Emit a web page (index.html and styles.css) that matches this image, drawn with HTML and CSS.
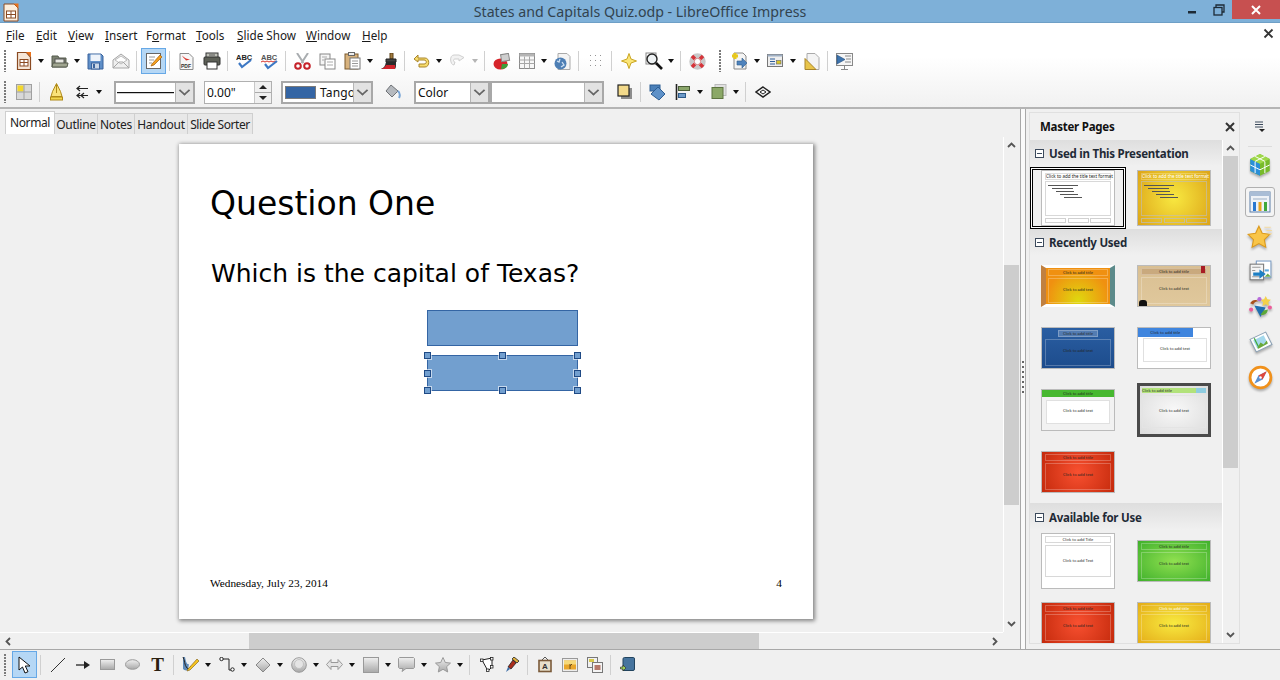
FILE: index.html
```html
<!DOCTYPE html>
<html lang="en">
<head>
<meta charset="utf-8">
<title>States and Capitals Quiz.odp - LibreOffice Impress</title>
<link rel="stylesheet" href="styles.css">
</head>
<body>
<svg class="defs" width="0" height="0" aria-hidden="true">
  <symbol id="i-new" viewBox="0 0 20 20"><path d="M3.500 1.500h9l4 4.500v12.500h-13z" fill="#f6e7d8" stroke="#8a4a22" stroke-width="1.200"/><path d="M12 1h5v5z" fill="#e8721c"/><rect x="6" y="8.500" width="8" height="6.500" fill="#fff" stroke="#8a4a22"/><path d="M6 11.500h8M10 8.500v6.500" stroke="#8a4a22"/></symbol>
</svg>

<header class="titlebar">
  <svg class="app-icon" width="16" height="19" viewBox="0 0 16 19"><path d="M1 1h10l4 4v13H1z" fill="#fbeedd" stroke="#8a4a22"/><path d="M10.500 0.500h5v5z" fill="#e8721c"/><rect x="3.500" y="8" width="9" height="7" fill="#fff" stroke="#8a4a22"/><path d="M3.500 11.500h9M8 8v7" stroke="#8a4a22"/></svg>
  <div class="doc-title">States and Capitals Quiz.odp - LibreOffice Impress</div>
  <div class="win-controls">
    <span class="win-btn"><svg width="10" height="10" viewBox="0 0 10 10"><rect x="1" y="6" width="8" height="2.500" fill="#1d2a36"/></svg></span>
    <span class="win-btn"><svg width="12" height="12" viewBox="0 0 12 12"><path d="M3 3V1h8v7H9" fill="none" stroke="#1d2a36" stroke-width="1.300"/><rect x="1" y="3.500" width="8" height="7.500" fill="none" stroke="#1d2a36" stroke-width="1.300"/></svg></span>
    <span class="win-close"><svg width="12" height="12" viewBox="0 0 12 12"><path d="M2 2l8 8M10 2l-8 8" stroke="#fff" stroke-width="2"/></svg></span>
  </div>
</header>

<div class="chrome">
  <nav class="menubar">
    <span class="m m-file"><u>F</u>ile</span>
    <span class="m m-edit"><u>E</u>dit</span>
    <span class="m m-view"><u>V</u>iew</span>
    <span class="m m-insert"><u>I</u>nsert</span>
    <span class="m m-format">F<u>o</u>rmat</span>
    <span class="m m-tools"><u>T</u>ools</span>
    <span class="m m-show"><u>S</u>lide Show</span>
    <span class="m m-window"><u>W</u>indow</span>
    <span class="m m-help"><u>H</u>elp</span>
    <svg class="doc-close" width="11" height="11" viewBox="0 0 11 11"><path d="M1.500 1.500l8 8M9.500 1.500l-8 8" stroke="#333" stroke-width="1.800"/></svg>
  </nav>

  <div class="toolbar tb-one">
    <span class="grip"></span>
    <span class="b"><svg width="20" height="20"><use href="#i-new"/></svg></span><span class="d"></span>
    <span class="b"><svg width="18" height="16" viewBox="0 0 18 16"><path d="M1 3h6l1 2h7v9H1z" fill="#7d8272" stroke="#555a4c"/><rect x="4" y="6" width="9" height="5" fill="#e8e8e2" stroke="#555"/><path d="M1 14l1-4h15l-1 4z" fill="#a0a590" stroke="#555a4c"/></svg></span><span class="d"></span>
    <span class="b"><svg width="17" height="17" viewBox="0 0 17 17"><path d="M1 1h13l2 2v13H1z" fill="#5f8fc8" stroke="#3a639c"/><rect x="3.500" y="1.500" width="10" height="6.500" fill="#eef3fa"/><rect x="4.500" y="10" width="8" height="6" fill="#c9d6e6" stroke="#3a639c"/><rect x="6" y="11" width="2" height="4" fill="#3a639c"/></svg></span>
    <span class="b"><svg width="18" height="16" viewBox="0 0 18 16"><path d="M1 7l8-6 8 6v8H1z" fill="#efefef" stroke="#a5a5a5"/><path d="M3 7l6-4 6 4-6 4z" fill="#fff" stroke="#bbb"/><path d="M1 15l6-6h4l6 6" fill="none" stroke="#a5a5a5"/></svg></span>
    <span class="s"></span>
    <span class="b b-on"><svg width="18" height="18" viewBox="0 0 18 18"><rect x="1.500" y="1.500" width="14" height="15" fill="#fff" stroke="#666"/><path d="M4 5h6M4 8h5M4 11h3" stroke="#999"/><path d="M7 12l8-9 2 2-8 8-3 1z" fill="#f5a01e" stroke="#a15d08" stroke-width=".7"/></svg></span>
    <span class="s"></span>
    <span class="b"><svg width="15" height="17" viewBox="0 0 15 17"><path d="M1 .5h9l4 4v12H1z" fill="#f7f7f7" stroke="#8a8a8a"/><path d="M3 2.500c3 3 5 3.500 8 4l-4 1C6 6 4 4.500 3 2.500z" fill="#d8322a"/><text x="2" y="14.500" class="svgt">PDF</text></svg></span>
    <span class="b"><svg width="18" height="18" viewBox="0 0 18 18"><rect x="3" y="1" width="12" height="5" fill="#bfc1b8" stroke="#333"/><rect x="1" y="5" width="16" height="8" rx="1" fill="#5d6057" stroke="#333"/><rect x="4" y="10" width="10" height="7" fill="#fff" stroke="#333"/><path d="M6 3h6" stroke="#555"/></svg></span>
    <span class="s"></span>
    <span class="b"><svg width="18" height="16" viewBox="0 0 18 16"><text x="0" y="7" class="abc">ABC</text><path d="M3 10l3 4 9-7" fill="none" stroke="#3d78c4" stroke-width="2.200"/></svg></span>
    <span class="b"><svg width="18" height="17" viewBox="0 0 18 17"><text x="0" y="7" class="abc abc-r">ABC</text><path d="M0 9l2-1 2 1 2-1 2 1 2-1 2 1 2-1 2 1" fill="none" stroke="#d8322a"/><path d="M4 11l3 4 9-7" fill="none" stroke="#3d78c4" stroke-width="2.200"/></svg></span>
    <span class="s"></span>
    <span class="b"><svg width="17" height="17" viewBox="0 0 17 17"><path d="M3 0l6.500 10M14 0L7.500 10" stroke="#a9adb0" stroke-width="2"/><circle cx="4" cy="13" r="2.800" fill="#fff" stroke="#c5222a" stroke-width="2"/><circle cx="13" cy="13" r="2.800" fill="#fff" stroke="#c5222a" stroke-width="2"/></svg></span>
    <span class="b"><svg width="17" height="17" viewBox="0 0 17 17"><rect x="1" y="1" width="10" height="11" fill="#f6f6f6" stroke="#888"/><rect x="6" y="6" width="10" height="10" fill="#fff" stroke="#888"/><path d="M3 4h5M3 7h2M8 9h6M8 12h6" stroke="#aaa"/></svg></span>
    <span class="b"><svg width="17" height="18" viewBox="0 0 17 18"><rect x="1" y="2" width="13" height="15" fill="#d7b27e" stroke="#7d5a2c"/><rect x="4.500" y=".5" width="6" height="3" fill="#eee" stroke="#666"/><rect x="6" y="6" width="10" height="11" fill="#fff" stroke="#777"/><path d="M8 9h6M8 11.500h6M8 14h6" stroke="#999"/></svg></span><span class="d"></span>
    <span class="b"><svg width="17" height="17" viewBox="0 0 17 17"><path d="M10 0h3v6h-3z" fill="#a07a3e" stroke="#5f4218"/><path d="M6 6h10v3H6z" fill="#444" stroke="#222"/><path d="M6 9h10c0 4 0 6-1 7H1c3-1 4-3 5-7z" fill="#2b2b2b"/><path d="M1 16c3-1 4-2 5-4h9v4z" fill="#d0242c"/></svg></span>
    <span class="s"></span>
    <span class="b"><svg width="17" height="14" viewBox="0 0 17 14"><path d="M5 1L1 5l4 3V6h6c3 0 3 4 0 4H6v3h6c5 0 5-9 0-9H5z" fill="#f7dc6c" stroke="#a8842a"/></svg></span><span class="d"></span>
    <span class="b"><svg width="17" height="14" viewBox="0 0 17 14"><path d="M10 1h-5c-5 0-4 10 0 10l1-3c-2 0-2-3 0-3h4v2l5-3.500z" fill="#f2f2f2" stroke="#cfcfcf"/></svg></span><span class="d d-off"></span>
    <span class="s"></span>
    <span class="b"><svg width="18" height="17" viewBox="0 0 18 17"><ellipse cx="7.500" cy="11" rx="7" ry="5.500" fill="#d6242a"/><path d="M8 16c4 0 7-2 7-5H9z" fill="#3f9c3a"/><rect x="8" y="1" width="8" height="7" fill="#cfcfcf" stroke="#888" transform="rotate(-10 12 4)"/></svg></span>
    <span class="b"><svg width="16" height="16" viewBox="0 0 16 16"><rect x=".5" y=".5" width="15" height="15" fill="#f8f8f8" stroke="#8b8b8b"/><rect x=".5" y=".5" width="15" height="3" fill="#b5b5b5"/><path d="M.5 7h15M.5 10.500h15M5.500 3.500v12M10.500 3.500v12" stroke="#a8a8a8"/></svg></span><span class="d"></span>
    <span class="b"><svg width="17" height="17" viewBox="0 0 17 17"><path d="M4 .5h9l3 3v13H4z" fill="#f4f4f4" stroke="#aaa"/><circle cx="6.500" cy="10.500" r="6" fill="#4e7fb5"/><path d="M3 8l2 1 1-3M8 9l2 3-3 2" stroke="#cfe0f2" stroke-width="1.300" fill="none"/></svg></span>
    <span class="s"></span>
    <span class="b"><svg width="14" height="14" viewBox="0 0 14 14" class="dots"><path d="M1 1h1v1H1zm5 0h1v1H6zm5 0h1v1h-1zM1 6h1v1H1zm5 0h1v1H6zm5 0h1v1h-1zM1 11h1v1H1zm5 0h1v1H6zm5 0h1v1h-1z" fill="#8a8a8a"/></svg></span>
    <span class="s"></span>
    <span class="b"><svg width="16" height="16" viewBox="0 0 16 16"><path d="M8 .5l2 5.500 5.500 2-5.500 2-2 5.500-2-5.500L.5 8l5.500-2z" fill="#fbe678" stroke="#c9a520"/></svg></span>
    <span class="b"><svg width="18" height="18" viewBox="0 0 18 18"><rect x="1" y="1" width="10" height="11" fill="#fff" stroke="#888"/><circle cx="7" cy="7" r="5" fill="#eef2f4" stroke="#222" stroke-width="1.400"/><path d="M11 11l6 6" stroke="#111" stroke-width="2.600"/></svg></span><span class="d"></span>
    <span class="s"></span>
    <span class="b"><svg width="17" height="17" viewBox="0 0 17 17"><circle cx="8.500" cy="8.500" r="6" fill="#fff" stroke="#c9c9c9" stroke-width="4.500"/><path d="M3 3l3 3M14 3l-3 3M3 14l3-3M14 14l-3-3" stroke="#d6343a" stroke-width="3.500"/><circle cx="8.500" cy="8.500" r="3.200" fill="#fff" stroke="#b44" stroke-width=".7"/></svg></span>
    <span class="grip grip-mid"></span>
    <span class="b"><svg width="18" height="18" viewBox="0 0 18 18"><path d="M3 1h9l3 3v13H3z" fill="#f4f4f4" stroke="#888"/><path d="M6 9h5V6l5 5-5 5v-3H6z" fill="#4f83bd" stroke="#2d5a8c" stroke-width=".6"/><path d="M4 1v6M1 4h6" stroke="#e8c81c" stroke-width="3"/></svg></span><span class="d"></span>
    <span class="b"><svg width="18" height="14" viewBox="0 0 18 14"><rect x=".5" y=".5" width="15" height="12" fill="#eee" stroke="#777"/><rect x=".5" y=".5" width="15" height="2" fill="#9fb0c4"/><path d="M3 5h5M3 7.500h5M3 10h5" stroke="#2f5f9c"/><rect x="9.500" y="6.500" width="4.500" height="3.500" fill="#d6c52c" stroke="#666" stroke-width=".6"/></svg></span><span class="d"></span>
    <span class="b"><svg width="16" height="17" viewBox="0 0 16 17"><path d="M3 .5h8l4 4v12H3z" fill="#f4f4f4" stroke="#aaa"/><path d="M1 5.500v11h11z" fill="#e8c44a" stroke="#a8842a"/></svg></span>
    <span class="s"></span>
    <span class="b"><svg width="17" height="17" viewBox="0 0 17 17"><rect x=".5" y=".5" width="16" height="12" fill="#f6f6f6" stroke="#888"/><path d="M1 2v9l8-4.500z" fill="#3e74ae" stroke="#244e7c" stroke-width=".6"/><path d="M9 3h6M10 6h5M9 9h6" stroke="#888"/><path d="M8.500 13v3M5 16.500h7" stroke="#888"/></svg></span>
  </div>

  <div class="toolbar tb-two">
    <span class="grip"></span>
    <span class="b"><svg width="16" height="16" viewBox="0 0 16 16"><rect x=".5" y=".5" width="15" height="15" fill="#d8d8d8" stroke="#a0a0a0"/><rect x="1.500" y="1.500" width="6" height="6" fill="#f3d82c"/><path d="M8 .5v15M.5 8h15" stroke="#a0a0a0"/></svg></span>
    <span class="s"></span>
    <span class="b"><svg width="13" height="18" viewBox="0 0 13 18"><path d="M6.500 .5l4 8 1.500 5H1l1.500-5z" fill="#f9e27a" stroke="#b08a18"/><path d="M6.500 1v9" stroke="#b08a18"/><rect x=".5" y="14" width="12" height="3" fill="#f2d64c" stroke="#b08a18"/></svg></span>
    <span class="b"><svg width="14" height="14" viewBox="0 0 14 14"><path d="M13 3.500H2M5 1L2 3.500 5 6M13 10.500H2M5 8l-3 2.500L5 13M9 8l-3 2.500L9 13" fill="none" stroke="#222" stroke-width="1.200"/></svg></span><span class="d"></span>
    <span class="combo combo-line"><span class="line-sample"></span><span class="arrow"></span></span>
    <span class="combo combo-width"><span class="combo-text">0.00"</span><span class="spin"><i class="up"></i><i class="dn"></i></span></span>
    <span class="combo combo-color"><span class="swatch"></span><span class="combo-text">Tango</span><span class="arrow"></span></span>
    <span class="b b-fill"><svg width="16" height="16" viewBox="0 0 16 16"><path d="M6 1l7 6-6 6-6-6z" fill="#b5b9be" stroke="#6f7276"/><path d="M13 7c2 2 2 5 1 7" fill="none" stroke="#7aa6d6" stroke-width="2"/></svg></span>
    <span class="combo combo-area"><span class="combo-text">Color</span><span class="arrow"></span></span>
    <span class="combo combo-value"><span class="combo-text"></span><span class="arrow"></span></span>
    <span class="b b-shadow"><svg width="16" height="16" viewBox="0 0 16 16"><rect x="4" y="4" width="11" height="11" fill="#8d8d8d"/><rect x="1" y="1" width="11" height="11" fill="#f2d98a" stroke="#222" stroke-width="1.200"/></svg></span>
    <span class="s"></span>
    <span class="b"><svg width="17" height="17" viewBox="0 0 17 17"><rect x="1" y="1" width="10" height="6" fill="#4a7fb8" stroke="#2b5c92"/><path d="M2 10l7-7 7 7-6 6z" fill="#5e91c8" stroke="#2b5c92"/></svg></span>
    <span class="b"><svg width="16" height="16" viewBox="0 0 16 16"><path d="M1.500 0v16" stroke="#222" stroke-width="1.600"/><rect x="3.500" y="2.500" width="11" height="4" fill="#8aa66a" stroke="#4a5c38"/><rect x="3.500" y="9.500" width="7" height="4" fill="#6c9ac8" stroke="#2e5a88"/></svg></span><span class="d"></span>
    <span class="b"><svg width="16" height="16" viewBox="0 0 16 16"><rect x="4" y=".5" width="11" height="11" fill="#e0e0e0" stroke="#bbb"/><rect x="1" y="3.500" width="11" height="11" fill="#8ba867" stroke="#5d7440"/></svg></span><span class="d"></span>
    <span class="s"></span>
    <span class="b"><svg width="16" height="12" viewBox="0 0 16 12"><path d="M8 1l7 5-7 5-7-5z" fill="none" stroke="#222" stroke-width="1.500"/><path d="M5 6l3-2 3 2-3 2z" fill="#fff" stroke="#222"/></svg></span>
  </div>
</div>

<main class="work">
  <section class="editor">
    <div class="tabs">
      <span class="tab tab-on">Normal</span>
      <span class="tab tab-out">Outline</span>
      <span class="tab tab-not">Notes</span>
      <span class="tab tab-han">Handout</span>
      <span class="tab tab-sor">Slide Sorter</span>
    </div>
    <div class="stage">
      <div class="canvas">
        <article class="slide">
          <h1 class="s-title">Question One</h1>
          <p class="s-sub">Which is the capital of Texas?</p>
          <div class="shape shape-a"></div>
          <div class="shape shape-b">
            <i class="h h-tl"></i><i class="h h-tc"></i><i class="h h-tr"></i>
            <i class="h h-ml"></i><i class="h h-mr"></i>
            <i class="h h-bl"></i><i class="h h-bc"></i><i class="h h-br"></i>
          </div>
          <div class="s-foot"><span>Wednesday, July 23, 2014</span><span>4</span></div>
        </article>
      </div>
      <div class="vscroll">
        <span class="sb-arrow"><svg width="9" height="6" viewBox="0 0 9 6"><path d="M1 5l3.500-3.500L8 5" fill="none" stroke="#555" stroke-width="1.800"/></svg></span>
        <span class="v-track"><span class="v-thumb"></span></span>
        <span class="sb-arrow"><svg width="9" height="6" viewBox="0 0 9 6"><path d="M1 1l3.500 3.500L8 1" fill="none" stroke="#555" stroke-width="1.800"/></svg></span>
      </div>
    </div>
    <div class="hscroll">
      <span class="h-arrow"><svg width="6" height="9" viewBox="0 0 6 9"><path d="M5 1L1.500 4.500 5 8" fill="none" stroke="#555" stroke-width="1.800"/></svg></span>
      <span class="h-track"><span class="h-thumb"></span></span>
      <span class="h-arrow"><svg width="6" height="9" viewBox="0 0 6 9"><path d="M1 1l3.500 3.500L1 8" fill="none" stroke="#555" stroke-width="1.800"/></svg></span>
    </div>
  </section>

  <div class="splitter"><span class="split-dots"></span></div>

  <aside class="panel">
    <div class="panel-head"><span>Master Pages</span><svg width="10" height="10" viewBox="0 0 10 10"><path d="M1 1l8 8M9 1L1 9" stroke="#333" stroke-width="2"/></svg></div>
    <div class="panel-body">
      <div class="deck">
        <div class="sec"><span class="box"></span>Used in This Presentation</div>
        <div class="grid grid-used">
          <div class="cell"><span class="sel"><span class="th th-plain th-used"><b>Click to add the title text format</b><em class="ol"><u></u><u></u><u></u><u></u><u></u></em><s class="ft"><i></i><i></i><i></i></s></span></span></div>
          <div class="cell"><span class="th th-yellow th-used"><b>Click to add the title text format</b><em class="ol"><u></u><u></u><u></u><u></u><u></u></em><s class="ft"><i></i><i></i><i></i></s></span></div>
        </div>
        <div class="sec"><span class="box"></span>Recently Used</div>
        <div class="grid">
          <div class="cell"><span class="th th-orange"><b>Click to add title</b><span>Click to add text</span></span></div>
          <div class="cell"><span class="th th-tan"><b>Click to add title</b><span>Click to add text</span></span></div>
          <div class="cell"><span class="th th-blue"><b>Click to add title</b><span>Click to add text</span></span></div>
          <div class="cell"><span class="th th-sky"><b>Click to add title</b><span>Click to add text</span></span></div>
          <div class="cell"><span class="th th-green"><b>Click to add title</b><span>Click to add text</span></span></div>
          <div class="cell"><span class="th th-dark"><b>Click to add title</b><span>Click to add text</span></span></div>
          <div class="cell"><span class="th th-red"><b>Click to add title</b><span>Click to add text</span></span></div>
        </div>
        <div class="sec sec-tall"><span class="box"></span>Available for Use</div>
        <div class="grid">
          <div class="cell"><span class="th th-white"><b>Click to add Title</b><span>Click to add Text</span></span></div>
          <div class="cell"><span class="th th-lime"><b>Click to add title</b><span>Click to add text</span></span></div>
          <div class="cell"><span class="th th-red"><b>Click to add title</b><span>Click to add text</span></span></div>
          <div class="cell"><span class="th th-gold"><b>Click to add title</b><span>Click to add text</span></span></div>
        </div>
      </div>
      <div class="pscroll">
        <span class="sb-arrow"><svg width="9" height="6" viewBox="0 0 9 6"><path d="M1 5l3.500-3.500L8 5" fill="none" stroke="#555" stroke-width="1.800"/></svg></span>
        <span class="p-track"><span class="p-thumb"></span></span>
        <span class="sb-arrow"><svg width="9" height="6" viewBox="0 0 9 6"><path d="M1 1l3.500 3.500L8 1" fill="none" stroke="#555" stroke-width="1.800"/></svg></span>
      </div>
    </div>
  </aside>

  <div class="sidetabs">
    <span class="st st-menu"><svg width="12" height="12" viewBox="0 0 12 12"><path d="M1 1h8M1 3.500h8M1 6h8" stroke="#3c4a5c"/><path d="M5 8h6l-3 3z" fill="#222"/></svg></span>
    <span class="st-rule"></span>
    <span class="st st-i"><svg width="24" height="26" viewBox="0 0 22 24"><path d="M11 1l9 4.500v11L11 21l-9-4.500v-11z" fill="#77bb2a"/><path d="M2 5.500l9 4.500v11l-9-4.500z" fill="#2a8fd8"/><path d="M11 1l9 4.500-9 4.500-9-4.500z" fill="#9fd84a"/><path d="M6.500 3.200l9 4.500M15.500 3.200l-9 4.500M6.500 8v10.500M15.500 8v10.500M2 11l9 4.500 9-4.500" stroke="#fff" stroke-width=".9" fill="none"/></svg></span>
    <span class="st st-on"><svg width="24" height="24" viewBox="0 0 24 24"><rect x="2" y="2" width="20" height="20" fill="#eef2f7" stroke="#5d7fa8"/><rect x="2" y="2" width="20" height="4" fill="#a9bdd6"/><path d="M5 9h14" stroke="#9db0c6"/><rect x="5" y="12" width="3" height="9" fill="#2a78d0"/><rect x="10.500" y="12" width="3" height="9" fill="#e8a41c"/><rect x="16" y="12" width="3" height="9" fill="#3fa83a"/></svg></span>
    <span class="st st-i"><svg width="26" height="26" viewBox="0 0 24 24"><path d="M11 2l3 6.500 7 1-5 5 1.300 7L11 18l-6.300 3.500L6 14.500 1 9.500l7-1z" fill="#f9c548" stroke="#dc9a1c"/><path d="M16 3h6M18 6h5M20 9h3" stroke="#f4d9a0"/></svg></span>
    <span class="st st-i"><svg width="25" height="25" viewBox="0 0 24 24"><rect x="8" y="1" width="14" height="16" fill="#fff" stroke="#7b9cc4"/><rect x="2" y="4" width="13" height="15" fill="#f4f4f4" stroke="#777"/><path d="M4 7h8M4 10h3M4 16h8" stroke="#999"/><path d="M5 12h6V9l6 4.500-6 4.500v-3H5z" fill="#1d7fc4"/><path d="M16 9h4v2h-4z" fill="#5ca8e0"/><path d="M16 16l3-3 3 3z" fill="#6ba84a"/></svg></span>
    <span class="st st-i"><svg width="25" height="25" viewBox="0 0 24 24"><path d="M6 10l11 2-5 9z" fill="#1f6fb0"/><path d="M2 8c2-4 6-4 8-2-2 0-4 1-5 3z" fill="#a8501c"/><path d="M12 19c3 1 7-1 7-5l-4 1z" fill="#5da83a"/><path d="M17 1l1.500 3 3.500.5-2.500 2.500.6 3.500-3.100-1.700-3.100 1.700.6-3.500-2.500-2.500L15.500 4z" fill="#f4d14a"/><circle cx="11" cy="4" r="2" fill="#b66adb"/><circle cx="21" cy="12" r="2" fill="#ec5d9a"/><circle cx="3" cy="14" r="2" fill="#ec5d9a"/></svg></span>
    <span class="st st-i"><svg width="25" height="25" viewBox="0 0 24 24"><path d="M2 9l15-7 6 12-15 7z" fill="#fff" stroke="#8ba0b4"/><path d="M5 10l10-5 4 8-10 5z" fill="#a4d8ec"/><path d="M9 17l3-5 3 2 3-4 1 3-9 5z" fill="#6aa83a"/><path d="M6 8l4 8" stroke="#3fa83a" stroke-width="1.200"/></svg></span>
    <span class="st st-i"><svg width="25" height="25" viewBox="0 0 24 24"><circle cx="12" cy="12" r="10" fill="#fff" stroke="#f0911c" stroke-width="2.600"/><path d="M6 18l4-8 8-4-4 8z" fill="#5b8fd0"/><path d="M18 6l-8 4 4 4z" fill="#e0483c"/><circle cx="12" cy="12" r="1.200" fill="#fff"/></svg></span>
  </div>
</main>

<footer class="toolbar tb-draw">
  <span class="grip"></span>
  <span class="b b-on b-sel"><svg width="13" height="18" viewBox="0 0 13 18"><path d="M1 1v13l3.500-3 2.500 6 3-1.300L7.300 10H12z" fill="#fff" stroke="#111"/></svg></span>
  <span class="s"></span>
  <span class="b"><svg width="16" height="16" viewBox="0 0 16 16"><path d="M1 15L15 1" stroke="#333"/></svg></span>
  <span class="b"><svg width="14" height="8" viewBox="0 0 14 8"><path d="M0 4h9" stroke="#222" stroke-width="1.300"/><path d="M8 0l6 4-6 4z" fill="#222"/></svg></span>
  <span class="b"><svg width="15" height="12" viewBox="0 0 15 12"><defs><linearGradient id="g1" x1="0" y1="0" x2="0" y2="1"><stop offset="0" stop-color="#f0f0f0"/><stop offset="1" stop-color="#a8a8a8"/></linearGradient></defs><rect x=".5" y=".5" width="14" height="10" fill="url(#g1)" stroke="#9a9a9a"/></svg></span>
  <span class="b"><svg width="15" height="11" viewBox="0 0 15 11"><ellipse cx="7.500" cy="5.500" rx="7" ry="4.800" fill="url(#g1)" stroke="#9a9a9a"/></svg></span>
  <span class="b"><span class="t-glyph">T</span></span>
  <span class="s"></span>
  <span class="b"><svg width="17" height="15" viewBox="0 0 17 15"><path d="M1 0h2c1 5 2 8 4 7l-1 6c-2 1-4 0-5-1z" fill="#5f8ab8"/><path d="M1 0c2 3 1 8 4 11 2 2 3 0 4-2" fill="none" stroke="#222"/><path d="M6 12l9-10 2 2-9 9-3 1z" fill="#f5c21e" stroke="#7a5a10" stroke-width=".6"/></svg></span><span class="d"></span>
  <span class="b"><svg width="16" height="15" viewBox="0 0 16 15"><path d="M4 2h6v11h3" fill="none" stroke="#222"/><circle cx="2.500" cy="2" r="1.700" fill="#fff" stroke="#222"/><circle cx="13.500" cy="12.500" r="1.700" fill="#fff" stroke="#222"/></svg></span><span class="d"></span>
  <span class="b"><svg width="16" height="16" viewBox="0 0 16 16"><path d="M8 1l7 7-7 7-7-7z" fill="url(#g1)" stroke="#888"/></svg></span><span class="d"></span>
  <span class="b"><svg width="16" height="16" viewBox="0 0 16 16"><circle cx="8" cy="8" r="7.300" fill="url(#g1)" stroke="#999"/><circle cx="8" cy="7" r="4.500" fill="#e4e4e4" stroke="#c2c2c2"/></svg></span><span class="d"></span>
  <span class="b"><svg width="17" height="11" viewBox="0 0 17 11"><path d="M5 .5v3h7v-3l4.500 5-4.500 5v-3H5v3L.5 5.500z" fill="#e4e4e4" stroke="#999"/></svg></span><span class="d"></span>
  <span class="b"><svg width="16" height="16" viewBox="0 0 16 16"><rect x=".5" y=".5" width="15" height="15" fill="url(#g1)" stroke="#999"/></svg></span><span class="d"></span>
  <span class="b"><svg width="17" height="15" viewBox="0 0 17 15"><path d="M1.500.5h14l1 1v9l-1 1H8l-4 3 1-3H1.500l-1-1v-9z" fill="url(#g1)" stroke="#999"/></svg></span><span class="d"></span>
  <span class="b"><svg width="16" height="16" viewBox="0 0 16 16"><path d="M8 .5l2.300 5 5.200.6-3.900 3.600 1.100 5.300L8 12.300 3.300 15l1.100-5.300L.5 6.100l5.200-.6z" fill="url(#g1)" stroke="#999"/></svg></span><span class="d"></span>
  <span class="s"></span>
  <span class="b"><svg width="14" height="15" viewBox="0 0 14 15"><path d="M2 3l10-2 0 9-4 4z" fill="#fff" stroke="#222"/><rect x=".5" y="2" width="2.500" height="2.500" fill="#fff" stroke="#222" stroke-width=".8"/><rect x="10.500" y=".5" width="2.500" height="2.500" fill="#fff" stroke="#222" stroke-width=".8"/><rect x="10.500" y="8.500" width="2.500" height="2.500" fill="#fff" stroke="#222" stroke-width=".8"/><rect x="6.500" y="12" width="2.500" height="2.500" fill="#fff" stroke="#222" stroke-width=".8"/></svg></span>
  <span class="b"><svg width="14" height="16" viewBox="0 0 14 16"><path d="M9 0l5 4-2 2-5-4z" fill="#e0b03c" stroke="#222" stroke-width=".8"/><path d="M8 3l3 3-5 6-3-2z" fill="#a82c1c" stroke="#222" stroke-width=".8"/><path d="M3 10l2 2-4 3z" fill="#3f6fa8"/></svg></span>
  <span class="s"></span>
  <span class="b"><svg width="14" height="16" viewBox="0 0 14 16"><path d="M4 3l3-3 3 3" fill="none" stroke="#555"/><rect x="1" y="3.500" width="12" height="11" fill="#e8e0cc" stroke="#7a5a3a" stroke-width="1.600"/><text x="4" y="12" class="svgt svgt-a">A</text></svg></span>
  <span class="b"><svg width="16" height="14" viewBox="0 0 16 14"><rect x=".5" y=".5" width="15" height="13" fill="#ededed" stroke="#999"/><rect x="2" y="2.500" width="12" height="9" fill="#e8a62a"/><rect x="2" y="2.500" width="12" height="4" fill="#f5d97a"/><path d="M8 11V6M8 8l2-2" stroke="#6a4a1a"/></svg></span>
  <span class="b"><svg width="16" height="16" viewBox="0 0 16 16"><rect x=".5" y=".5" width="10" height="10" fill="#f0f0f0" stroke="#777"/><rect x="2" y="2" width="5" height="3" fill="#d6c84a"/><rect x="5.500" y="5.500" width="10" height="10" fill="#f4f4f4" stroke="#777"/><rect x="7.500" y="8" width="6" height="5" fill="#b5786a"/></svg></span>
  <span class="s"></span>
  <span class="b"><svg width="15" height="15" viewBox="0 0 15 15"><path d="M3 2q0-1.500 1.500-1.500h9q1 0 1 1.500v10q0 1.500-1.500 1.500H3z" fill="#46749e" stroke="#22445f"/><path d="M.5 10h2.500V8l3 3-3 3v-2H.5z" fill="#9fcf5a" stroke="#222" stroke-width=".6"/></svg></span>
</footer>
</body>
</html>
```

FILE: styles.css
```css
* { box-sizing: border-box; }
html, body { margin: 0; padding: 0; }
body {
  width: 1280px;
  height: 680px;
  overflow: hidden;
  background: #f0f0f0;
  font-family: "Noto Sans", "Open Sans", sans-serif;
  color: #111;
  display: flex;
  flex-direction: column;
}
.defs { position: absolute; }
.svgt { font: bold 5px "Liberation Sans", sans-serif; fill: #333; }
.svgt-a { font-size: 8px; }
.abc { font: bold 7.500px "Liberation Sans", sans-serif; fill: #222; }
.abc-r { fill: #555; }

/* title bar */
.titlebar {
  height: 23px;
  flex: none;
  background: #7eb0d8;
  border-bottom: 1px solid #6e9fc6;
  display: flex;
  align-items: flex-start;
  position: relative;
}
.app-icon { margin: 3px 0 0 3px; flex: none; }
.doc-title {
  flex: 1;
  text-align: center;
  font-size: 14.200px;
  line-height: 23px;
  color: #32434f;
  margin-right: 19px;
}
.win-controls { display: flex; align-items: flex-start; position: absolute; right: 0; top: 0; }
.win-btn { width: 27px; height: 19px; display: flex; align-items: center; justify-content: center; }
.win-close { width: 48px; height: 19px; background: #c75050; display: flex; align-items: center; justify-content: center; }

/* chrome */
.chrome {
  flex: none;
  height: 86px;
  background: linear-gradient(#fff 0, #fff 40%, #f1f1f1 100%);
  border-bottom: 2px solid #b4b4b4;
}
.menubar {
  height: 23px;
  display: flex;
  align-items: center;
  font-size: 11.700px;
  position: relative;
  color: #1a1a1a;
}
.m { display: block; flex: none; }
.m-file { margin-left: 6px; width: 30px; }
.m-edit { width: 32px; }
.m-view { width: 37px; }
.m-insert { width: 41px; }
.m-format { width: 50px; }
.m-tools { width: 41px; }
.m-show { width: 69px; }
.m-window { width: 56px; }
.m-help { width: 40px; }
.doc-close { position: absolute; right: 6px; top: 5px; }

/* toolbars */
.toolbar { display: flex; align-items: center; }
.tb-one { height: 30px; }
.tb-two { height: 30px; margin-top: 1px; }
.grip {
  width: 11px;
  height: 22px;
  flex: none;
  background: radial-gradient(circle at 1px 1px, #7a7a7a 0.8px, transparent 1.100px) 4px 0 / 3px 3px repeat-y;
}
.grip-mid { width: 17px; background-position: 9px 0; }
.b { width: 25px; height: 26px; flex: none; display: flex; align-items: center; justify-content: center; }
.b-on { background: #b5d7f5; border: 1px solid #66a8e6; }
.d { width: 11px; height: 20px; flex: none; position: relative; }
.d::after {
  content: "";
  position: absolute;
  left: 2px;
  top: 8px;
  border-left: 3.500px solid transparent;
  border-right: 3.500px solid transparent;
  border-top: 4px solid #111;
}
.d-off::after { border-top-color: #b5b5b5; }
.s { width: 8px; height: 20px; flex: none; position: relative; }
.s::after { content: ""; position: absolute; left: 3px; top: 0; width: 1px; height: 20px; background: #d0d0d0; }
.dots { opacity: .9; }

/* combos */
.combo {
  height: 23px;
  flex: none;
  background: #fff;
  border: 2px solid #a8a8a8;
  display: flex;
  align-items: center;
  font-size: 12px;
  color: #111;
}
.combo-text { flex: 1; min-width: 0; white-space: nowrap; }
.arrow {
  flex: none;
  width: 18px;
  height: 100%;
  background: #e2e2e2;
  border-left: 1px solid #b5b5b5;
  position: relative;
}
.arrow::after {
  content: "";
  position: absolute;
  left: 4px;
  top: 3px;
  width: 7px;
  height: 7px;
  border-right: 2px solid #666;
  border-bottom: 2px solid #666;
  transform: scale(.9, .8) rotate(45deg);
}
.combo-line { width: 81px; margin-left: 9px; }
.line-sample { flex: 1; height: 1px; background: #111; margin: 0 1px; box-shadow: 0 1px 0 #ccc; }
.combo-width { width: 68px; margin-left: 9px; padding-left: 2px; border-width: 1px; border-color: #b0b0b0; }
.spin { flex: none; width: 17px; height: 100%; display: flex; flex-direction: column; border-left: 1px solid #c8c8c8; background: #f0f0f0; }
.spin i { flex: 1; position: relative; display: block; }
.spin i::after { content: ""; position: absolute; left: 4px; border-left: 4px solid transparent; border-right: 4px solid transparent; }
.spin .up::after { top: 3px; border-bottom: 4px solid #222; }
.spin .dn { border-top: 1px solid #aaa; }
.spin .dn::after { top: 3px; border-top: 4px solid #222; }
.combo-color { width: 92px; margin-left: 9px; padding-left: 2px; }
.swatch { width: 31px; height: 13px; flex: none; background: #3465a4; border: 1px solid #7b7b7b; margin-right: 4px; }
.combo-color .combo-text { font-size: 12px; letter-spacing: .1px; }
.b-fill { margin-left: 7px; }
.combo-area { width: 76px; margin-left: 9px; padding-left: 2px; }
.combo-value { width: 114px; }
.b-shadow { margin-left: 8px; }

/* main */
.work { flex: 1; min-height: 0; display: flex; }
.editor { width: 1020px; flex: none; display: flex; flex-direction: column; }
.tabs { height: 25px; display: flex; align-items: flex-end; padding-left: 5px; flex: none; font-size: 12px; }
.tab {
  height: 21px;
  line-height: 21px;
  text-align: center;
  background: #e8e8e8;
  border: 1px solid #cfcfcf;
  border-bottom: 0;
  border-left: 0;
  white-space: nowrap;
  letter-spacing: -0.25px;
  color: #222;
}
.tab-on { width: 50px; height: 23px; line-height: 21px; background: #fff; border-left: 1px solid #cfcfcf; letter-spacing: -.4px; }
.tab-out { width: 43px; }
.tab-not { width: 37px; }
.tab-han { width: 53px; }
.tab-sor { width: 65px; letter-spacing: -.45px; }
.stage { flex: 1; min-height: 0; display: flex; }
.canvas { flex: 1; min-width: 0; background: #f0f0f0; padding: 10px 0 0 179px; border-bottom: 1px solid #fff; }
.slide {
  width: 634px;
  height: 475px;
  background: #fff;
  box-shadow: 1px 1px 4px 1px rgba(0,0,0,.45);
  position: relative;
  padding: 37px 31px 0 31px;
}
.s-title {
  margin: 0;
  font: 400 33px/46px "DejaVu Sans", sans-serif;
  color: #000;
}
.s-sub {
  margin: 30px 0 0 1px;
  font: 400 25px/34px "DejaVu Sans", sans-serif;
  color: #000;
}
.shape { position: absolute; background: #729fcf; border: 1px solid #3465a4; }
.shape-a { left: 248px; top: 166px; width: 151px; height: 36px; }
.shape-b { left: 248px; top: 211px; width: 151px; height: 36px; }
.h { position: absolute; width: 7px; height: 7px; background: #729fcf; border: 1.500px solid #1f4a85; outline: 1px solid rgba(255,255,255,.6); }
.h-tl { left: -4px; top: -4px; }
.h-tc { left: 71px; top: -4px; }
.h-tr { right: -4px; top: -4px; }
.h-ml { left: -4px; top: 14px; }
.h-mr { right: -4px; top: 14px; }
.h-bl { left: -4px; bottom: -4px; }
.h-bc { left: 71px; bottom: -4px; }
.h-br { right: -4px; bottom: -4px; }
.s-foot {
  position: absolute;
  left: 31px;
  right: 31px;
  top: 432px;
  display: flex;
  justify-content: space-between;
  font: 11.300px/14px "Liberation Serif", serif;
  color: #000;
}
.vscroll { width: 17px; margin: 3px 0 1px; padding-right: 1px; flex: none; display: flex; flex-direction: column; border-left: 1px solid #fff; background: #f0f0f0; }
.sb-arrow { height: 16px; flex: none; display: flex; align-items: center; justify-content: center; }
.v-track { flex: 1; padding: 112px 0 111px; display: flex; }
.v-thumb { flex: 1; background: #cdcdcd; }
.hscroll { height: 16px; flex: none; display: flex; align-items: center; padding-right: 17px; }
.h-arrow { width: 16px; height: 16px; flex: none; display: flex; align-items: center; justify-content: center; }
.h-track { flex: 1; height: 16px; padding: 0 228px 0 233px; display: flex; }
.h-thumb { flex: 1; background: #cdcdcd; }

.splitter { width: 6px; flex: none; border-left: 1px solid #a8a8a8; border-right: 1px solid #a8a8a8; position: relative; background: #fafafa; }
.split-dots { position: absolute; left: 0; top: 252px; width: 4px; height: 32px; background: radial-gradient(circle at 1px 1px, #666 .8px, transparent 1px) 1px 0 / 3px 5px repeat-y; }
.panel { width: 211px; flex: none; margin: 3px 0 5px 3px; border: 1px solid #e0e0e0; display: flex; flex-direction: column; min-height: 0; }
.panel-head { height: 27px; flex: none; display: flex; align-items: center; justify-content: space-between; padding: 0 4px 0 10px; font-size: 11.500px; letter-spacing: -.25px; font-weight: 700; color: #111; }
.panel-body { flex: 1; min-height: 0; display: flex; }
.deck { width: 192px; flex: none; overflow: hidden; }
.sec {
  height: 26px;
  display: flex;
  align-items: center;
  font-size: 11.500px;
  letter-spacing: -.25px;
  font-weight: 700;
  color: #1f2a36;
  padding-left: 5px;
  background: linear-gradient(#dedede, #f0f0f0);
  white-space: nowrap;
}
.sec-tall { height: 27px; padding-top: 2px; }
.box { width: 9px; height: 9px; border: 1px solid #3c4a5c; background: linear-gradient(#3c4a5c,#3c4a5c) center / 5px 1px no-repeat #fff; margin-right: 5px; flex: none; }
.grid { display: grid; grid-template-columns: 96px 96px; grid-auto-rows: 62px; }
.grid-used { grid-auto-rows: 63px; }
.cell { display: flex; align-items: center; justify-content: center; }
.sel { width: 96px; height: 62px; border: 1px solid #000; box-shadow: inset 0 0 0 1px #fff, inset 0 0 0 2px #000; display: flex; align-items: center; justify-content: center; }
.th {
  width: 74px;
  height: 42px;
  border: 1px solid #bbb;
  display: flex;
  flex-direction: column;
  align-items: center;
  overflow: hidden;
  font-size: 4px;
  line-height: 5px;
  color: #222;
  padding: 2px 3px;
  white-space: nowrap;
}
.th b { font-weight: 400; display: block; width: 100%; text-align: center; border: 1px solid rgba(255,255,255,.25); flex: none; }
.th > span { display: block; width: 100%; flex: 1; margin-top: 2px; text-align: center; line-height: 22px; border: 1px solid rgba(255,255,255,.25); }
.th-used { height: 56px; font-size: 4.500px; }
.th-used .ol { font-style: normal; display: flex; flex-direction: column; gap: 2px; width: 100%; flex: 1; margin-top: 1px; padding: 3px 2px; border: 1px solid rgba(190,190,190,.6); }
.ol u { display: block; height: 1px; background: #555; width: 50%; text-decoration: none; }
.ol u:nth-child(2) { margin-left: 4px; width: 35%; }
.ol u:nth-child(3) { margin-left: 8px; width: 30%; }
.ol u:nth-child(4) { margin-left: 12px; width: 30%; }
.ol u:nth-child(5) { margin-left: 16px; width: 30%; }
.ft { display: flex; justify-content: space-between; width: 100%; margin-top: 2px; height: 5px; flex: none; text-decoration: none; }
.ft i { display: block; width: 21px; border: 1px solid rgba(190,190,190,.7); }
.th-plain { background: #fff; }
.th-plain b { border-color: #ddd; }
.th-yellow { background: radial-gradient(circle at 50% 50%, #f8e840, #dca418); }
.th-yellow b { color: #fff; }
.th-orange { background: radial-gradient(ellipse at 50% 90%, #dfd80f, #f09010 70%); border-width: 3px 5px 3px 5px; border-color: #fff #5c8a8a #fff #c08040; padding: 1px 2px; }
.th-tan { background: linear-gradient(#d9bf92, #e0c89c); position: relative; }
.th-tan b { background: rgba(150,100,60,.25); }
.th-tan::before { content: ""; position: absolute; right: 5px; top: 0; width: 4px; height: 7px; background: #a81c24; }
.th-tan::after { content: ""; position: absolute; left: 1px; bottom: 0; width: 8px; height: 6px; background: #111; border-radius: 3px 3px 0 0; }
.th-blue { background: linear-gradient(#2a5ea2, #1d4c8c); }
.th-blue b { background: rgba(255,255,255,.2); width: 60%; }
.th-sky { background: #fff; padding: 0; }
.th-sky b { background: #3f85de; width: 76%; align-self: flex-start; border: 0; padding: 2px 0; }
.th-sky > span { border-color: #e0e0e0; margin: 1px 3px 6px 5px; width: auto; align-self: stretch; line-height: 20px; }
.th-green { background: #f2f2f2; padding: 0; }
.th-green b { background: #47b830; padding: 1px 0; border: 0; }
.th-green > span { background: #fff; border-color: #e0e0e0; margin: 3px 4px 6px; width: auto; align-self: stretch; line-height: 20px; }
.th-dark { height: 54px; border: 3px solid #4a4a4a; background: radial-gradient(#f8f8f8, #dcdcdc); padding: 2px; }
.th-dark b { background: linear-gradient(90deg, #b2e27a 85%, #8ecce0 85%); text-align: left; border: 0; }
.th-dark > span { border-color: #e4e4e4; line-height: 30px; margin-bottom: 4px; }
.th-red { background: radial-gradient(circle at 50% 50%, #f85030, #c42a0c); }
.th-white { height: 56px; background: #fff; }
.th-white b { border-color: #d8d8d8; }
.th-white > span { border-color: #d8d8d8; margin-bottom: 10px; line-height: 30px; }
.th-lime { background: radial-gradient(#90e050, #3fb02c); }
.th-gold { background: radial-gradient(#f8ea40, #e4ac18); }
.th-gold b { color: #fff; }

.pscroll { width: 17px; flex: none; display: flex; flex-direction: column; background: #f0f0f0; border-left: 1px solid #fff; padding-right: 1px; }
.p-track { flex: 1; display: flex; padding-bottom: 159px; }
.p-thumb { flex: 1; background: #cdcdcd; }

.sidetabs { width: 40px; flex: none; display: flex; flex-direction: column; align-items: center; padding-top: 8px; }
.st { width: 30px; height: 30px; flex: none; display: flex; align-items: center; justify-content: center; margin-bottom: 5px; }
.st-i svg { filter: drop-shadow(0 2px 1px rgba(0,0,0,.28)); }
.st-menu { height: 20px; margin-bottom: 9px; }
.st-rule { width: 24px; height: 1px; background: #dcdcdc; margin-bottom: 4px; flex: none; }
.st-on { border: 1px solid #b0b0b0; border-radius: 3px; background: #f4f4f4; margin-top: 1px; }

/* draw bar */
.tb-draw { height: 31px; flex: none; border-top: 1px solid #a8a8a8; background: #f0f0f0; padding-bottom: 1px; }
.tb-draw .grip { width: 12px; }
.b-sel { height: 27px; }
.t-glyph { font: 700 19px/18px "Liberation Serif", serif; color: #2a2010; }
```
